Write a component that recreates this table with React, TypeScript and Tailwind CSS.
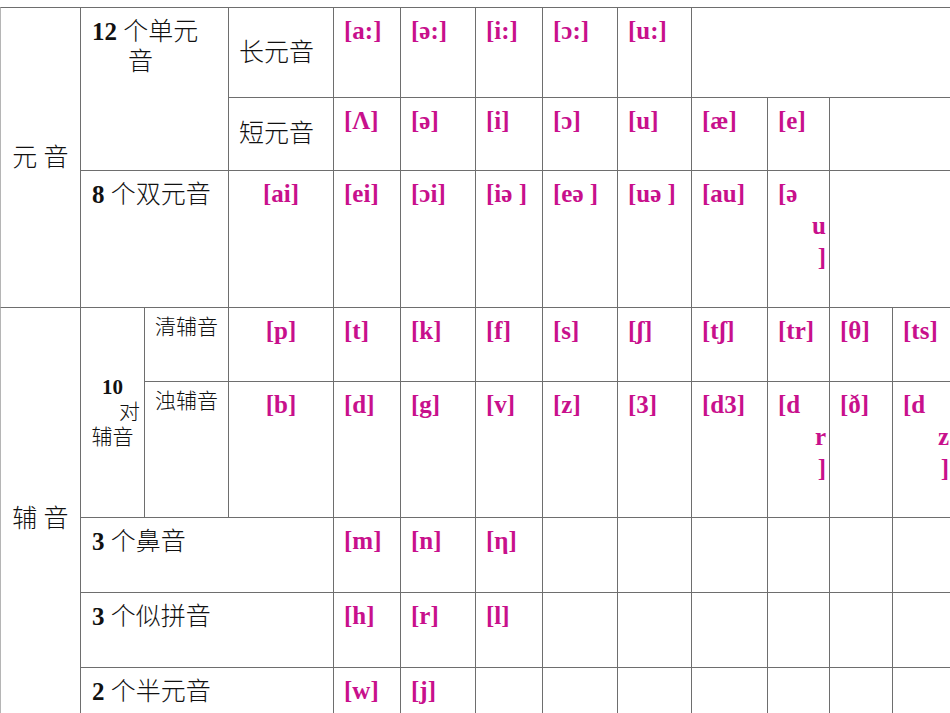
const line = 'border-l border-t border-[#6e6e6e]'
const ph = "font-['Liberation_Serif',serif] font-bold text-[25px] leading-[31px] text-[#c8108c]"
const zh = "font-['Liberation_Serif','Noto_Sans_CJK_SC',sans-serif] text-[25px] leading-[30px] text-[#111]"
const zhSmall = "font-['Liberation_Serif','Noto_Sans_CJK_SC',sans-serif] text-[21px] leading-[25px] text-[#111]"

function P({ s, center }: { s: string; center?: boolean }) {
  return (
    <td className={`${line} ${ph} whitespace-pre align-top pt-[7px] ${center ? 'text-center' : 'pl-[10px]'}`}>
      {s}
    </td>
  )
}

// phonetic cell that wraps onto three lines in the original sheet
function Stack({ a, b, tight }: { a: string; b: string; tight?: boolean }) {
  return (
    <td className={`${line} ${ph} align-top pt-[7px] pl-[10px] leading-[32px] ${tight ? 'pr-[1px]' : 'pr-[3px]'}`}>
      <div>{a}</div>
      <div className="text-right">{b}</div>
      <div className="text-right">]</div>
    </td>
  )
}

function Empty({ span = 1 }: { span?: number }) {
  return <td colSpan={span} className={line} />
}

function Label({ n, text, span }: { n: string; text: string; span: number }) {
  return (
    <td colSpan={span} className={`${line} ${zh} align-top pt-[9px] pl-[11px]`}>
      <b>{n}</b> <span className="font-light">{text}</span>
    </td>
  )
}

export default function App() {
  return (
    <div className="h-[713px] w-[950px] overflow-hidden bg-white pt-[7px]">
      <table className="w-[950px] table-fixed border-separate border-spacing-0 border-r border-[#6e6e6e]">
        <colgroup>
          <col className="w-[80px]" />
          <col className="w-[64px]" />
          <col className="w-[84px]" />
          <col className="w-[105px]" />
          <col className="w-[67px]" />
          <col className="w-[75px]" />
          <col className="w-[67px]" />
          <col className="w-[75px]" />
          <col className="w-[74px]" />
          <col className="w-[76px]" />
          <col className="w-[62px]" />
          <col className="w-[63px]" />
          <col className="w-[58px]" />
        </colgroup>
        <tbody>
          <tr className="h-[90px]">
            <td rowSpan={3} className={`${line} ${zh} border-l-[#b5b5b5] text-center align-middle font-light`}>
              元 音
            </td>
            <td colSpan={2} rowSpan={2} className={`${line} ${zh} align-top pt-[9px] pl-[11px]`}>
              <div>
                <b>12</b> <span className="font-light">个单元</span>
              </div>
              <div className="pl-[36px] font-light">音</div>
            </td>
            <td className={`${line} ${zh} align-middle pl-[10px] font-light`}>长元音</td>
            <P s="[a:]" />
            <P s="[ə:]" />
            <P s="[i:]" />
            <P s="[ɔ:]" />
            <P s="[u:]" />
            <Empty span={4} />
          </tr>
          <tr className="h-[73px]">
            <td className={`${line} ${zh} align-middle pl-[10px] font-light`}>短元音</td>
            <P s="[Λ]" />
            <P s="[ə]" />
            <P s="[i]" />
            <P s="[ɔ]" />
            <P s="[u]" />
            <P s="[æ]" />
            <P s="[e]" />
            <Empty span={2} />
          </tr>
          <tr className="h-[137px]">
            <Label n="8" text="个双元音" span={2} />
            <P s="[ai]" center />
            <P s="[ei]" />
            <P s="[ɔi]" />
            <P s="[iə ]" />
            <P s="[eə ]" />
            <P s="[uə ]" />
            <P s="[au]" />
            <Stack a="[ə" b="u" />
            <Empty span={2} />
          </tr>
          <tr className="h-[74px]">
            <td rowSpan={5} className={`${line} ${zh} border-l-[#b5b5b5] text-center align-middle font-light`}>
              辅 音
            </td>
            <td rowSpan={2} className={`${line} ${zhSmall} align-middle`}>
              <div className="text-center font-bold">10</div>
              <div className="pr-[4px] text-right font-light">对</div>
              <div className="text-center font-light">辅音</div>
            </td>
            <td className={`${line} ${zhSmall} align-top pt-[7px] pl-[10px] font-light`}>清辅音</td>
            <P s="[p]" center />
            <P s="[t]" />
            <P s="[k]" />
            <P s="[f]" />
            <P s="[s]" />
            <P s="[ʃ]" />
            <P s="[tʃ]" />
            <P s="[tr]" />
            <P s="[θ]" />
            <P s="[ts]" />
          </tr>
          <tr className="h-[136px]">
            <td className={`${line} ${zhSmall} align-top pt-[7px] pl-[10px] font-light`}>浊辅音</td>
            <P s="[b]" center />
            <P s="[d]" />
            <P s="[g]" />
            <P s="[v]" />
            <P s="[z]" />
            <P s="[3]" />
            <P s="[d3]" />
            <Stack a="[d" b="r" />
            <P s="[ð]" />
            <Stack a="[d" b="z" tight />
          </tr>
          <tr className="h-[75px]">
            <Label n="3" text="个鼻音" span={3} />
            <P s="[m]" />
            <P s="[n]" />
            <P s="[η]" />
            <Empty />
            <Empty />
            <Empty />
            <Empty />
            <Empty />
            <Empty />
          </tr>
          <tr className="h-[75px]">
            <Label n="3" text="个似拼音" span={3} />
            <P s="[h]" />
            <P s="[r]" />
            <P s="[l]" />
            <Empty />
            <Empty />
            <Empty />
            <Empty />
            <Empty />
            <Empty />
          </tr>
          <tr className="h-[62px]">
            <Label n="2" text="个半元音" span={3} />
            <P s="[w]" />
            <P s="[j]" />
            <Empty />
            <Empty />
            <Empty />
            <Empty />
            <Empty />
            <Empty />
            <Empty />
          </tr>
        </tbody>
      </table>
    </div>
  )
}
